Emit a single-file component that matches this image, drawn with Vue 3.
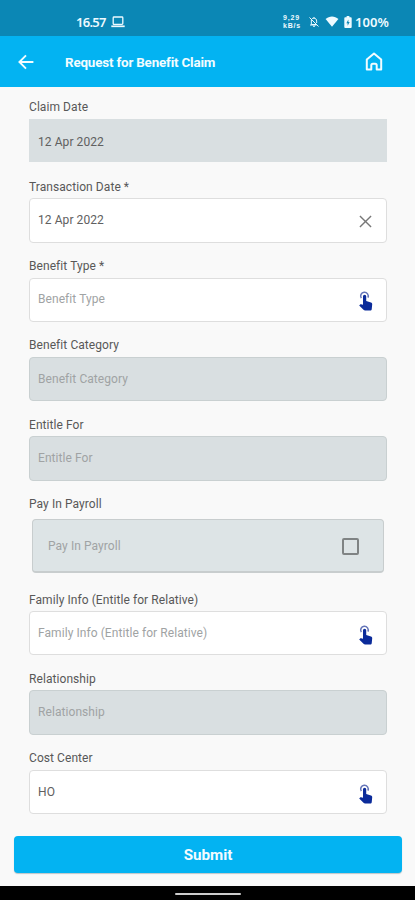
<script setup>
const fields = [
  { label: 'Claim Date', text: '12 Apr 2022', disabled: true, kind: 'square' },
  { label: 'Transaction Date *', text: '12 Apr 2022', icon: 'clear' },
  { label: 'Benefit Type *', hint: 'Benefit Type', icon: 'touch' },
  { label: 'Benefit Category', hint: 'Benefit Category', disabled: true },
  { label: 'Entitle For', hint: 'Entitle For', disabled: true },
  { label: 'Pay In Payroll', hint: 'Pay In Payroll', disabled: true, icon: 'check', kind: 'inset' },
  { label: 'Family Info (Entitle for Relative)', hint: 'Family Info (Entitle for Relative)', icon: 'touch' },
  { label: 'Relationship', hint: 'Relationship', disabled: true },
  { label: 'Cost Center', text: 'HO', icon: 'touch' },
]
</script>

<template>
  <div class="screen">
    <div class="status">
      <span class="time">16.57</span>
      <svg class="laptop" viewBox="0 0 14 12" fill="none" stroke="currentColor">
        <rect x="2.2" y="1" width="9.6" height="7.4" rx="0.8" stroke-width="1.3" />
        <path d="M0.3 10.3h13.4" stroke-width="1.7" />
      </svg>
      <span class="speed"><span>9,29</span><span>kB/s</span></span>
      <svg class="bell" viewBox="0 0 24 24" fill="none" stroke="currentColor" stroke-width="2">
        <path d="M8 5.5C9 4.7 10 4.3 12 4.3c3.4 0 5.3 2.5 5.3 6V14M6.7 8v9H17M4 18h13M10 20.5h4M12 2v2.5M3 3l18 18" />
      </svg>
      <svg class="wifi" viewBox="0 0 14 12" fill="currentColor"><path d="M0 3.4C4 -.3 10 -.3 14 3.4L7 11.8z" /></svg>
      <svg class="battery" viewBox="0 0 8 13">
        <path fill="currentColor" d="M2.5 0h3v1.4H7a1 1 0 0 1 1 1V12a1 1 0 0 1-1 1H1a1 1 0 0 1-1-1V2.4a1 1 0 0 1 1-1h1.5z" />
        <path fill="#0b87b5" d="M4.4 3.8v2.7h1.4L3.6 10.5V7.8H2.2z" />
      </svg>
      <span class="percent">100%</span>
    </div>

    <header class="bar">
      <svg class="back" viewBox="0 0 16 16" fill="none" stroke="currentColor" stroke-width="1.9">
        <path d="M15.4 8H1.6M8 1.3L1.4 8L8 14.7" />
      </svg>
      <h1>Request for Benefit Claim</h1>
      <svg class="home" viewBox="0 0 18 19" fill="none" stroke="currentColor" stroke-width="2" stroke-linejoin="round">
        <path d="M1.8 7.6L9 1.5l7.2 6.1V17.5h-4.5v-4.3a1.5 1.5 0 0 0-1.5-1.5H7.8a1.5 1.5 0 0 0-1.5 1.5v4.3H1.8z" />
      </svg>
    </header>

    <main class="form">
      <div v-for="f in fields" :key="f.label" class="field" :class="f.kind">
        <div class="label">{{ f.label }}</div>
        <div class="box" :class="{ disabled: f.disabled }">
          <span :class="f.hint ? 'hint' : 'value'">{{ f.hint || f.text }}</span>
          <svg v-if="f.icon === 'clear'" class="clear" viewBox="0 0 14 14" fill="none" stroke="#777" stroke-width="1.5">
            <path d="M1 1l12 12M13 1L1 13" />
          </svg>
          <svg v-if="f.icon === 'touch'" class="touch" viewBox="0 0 14 20">
            <path d="M2.3 6.5A4 4 0 1 1 9.3 5.9" fill="none" stroke="#6575b8" stroke-width="1.6" />
            <path fill="#0b2b9a" d="M4.1 4.5a1.7 1.7 0 0 1 3.4 0v4.9l5 1.6c.9.3 1.4 1 1.3 1.9l-.5 5.2c-.1.8-.7 1.4-1.5 1.4H6.2c-.5 0-.9-.2-1.3-.5L.1 14.3l.8-1c.3-.4.8-.5 1.2-.4l2 .5z" />
          </svg>
          <span v-if="f.icon === 'check'" class="check"></span>
        </div>
      </div>
    </main>

    <button class="submit">Submit</button>
    <footer class="nav"><span></span></footer>
  </div>
</template>

<style>
body { margin: 0; }
</style>

<style scoped>
.screen {
  width: 415px;
  height: 900px;
  display: flex;
  flex-direction: column;
  overflow: hidden;
  background: #f9f9f9;
  font-family: Roboto, sans-serif;
}
svg { display: block; flex: none; overflow: visible; }
.status {
  height: 36px;
  flex: none;
  box-sizing: border-box;
  padding: 7px 26px 0 76px;
  display: flex;
  align-items: center;
  background: #0b87b5;
  color: #eefaff;
  font: 600 13px/16px "Noto Sans", sans-serif;
}
.time { width: 35px; letter-spacing: -0.7px; }
.laptop { width: 14px; height: 12px; }
.speed {
  margin-left: auto;
  width: 19px;
  display: flex;
  flex-direction: column;
  font: 700 7px/8px "Liberation Sans", sans-serif;
  letter-spacing: 0.8px;
}
.bell { width: 12px; height: 12px; margin-left: 6px; }
.wifi { width: 14px; height: 11px; margin-left: 5px; }
.battery { width: 8px; height: 12px; margin-left: 5px; }
.percent { width: 34px; margin-left: 3px; letter-spacing: 0.1px; }
.bar {
  height: 51px;
  flex: none;
  box-sizing: border-box;
  padding: 0 32px 0 18px;
  display: flex;
  align-items: center;
  background: #03b3f2;
  color: #f2fcff;
}
.back { width: 16px; height: 16px; }
h1 { margin: 2px 0 0 31px; font-size: 13.4px; line-height: 20px; font-weight: 700; letter-spacing: -0.18px; white-space: nowrap; }
.home { width: 18px; height: 19px; margin-left: auto; }
.form { box-sizing: border-box; flex: none; padding: 12.3px 28px 0 29px; height: 736px; }
.label { height: 16px; margin-bottom: 3.5px; color: #585858; font-size: 12px; line-height: 16px; letter-spacing: 0.07px; }
.field { margin-bottom: 15.5px; }
.box {
  height: 44.4px;
  box-sizing: border-box;
  border: 1px solid #dedede;
  border-radius: 4px;
  background: #fff;
  padding: 0 14px 1px 8px;
  display: flex;
  align-items: center;
  justify-content: space-between;
  font-size: 12px;
  letter-spacing: 0.07px;
}
.box.disabled { background: #d9dfe1; border-color: #c9d0d1; }
.value { color: #606060; }
.hint { color: #a0a3a4; }
.square .label { margin-bottom: 4px; }
.square .box { height: 43px; border-color: #d9dfe1; border-radius: 0; padding: 3px 14px 0 8px; }
.square { margin-bottom: 16.4px; }
.inset .box { height: 54px; margin: 7px 3px 0; padding: 1px 24px 0 15px; background: #dde4e6; border-color: #c8cdce; border-bottom-width: 2px; }
.inset { margin-bottom: 18.3px; }
.clear { width: 13px; height: 13px; position: relative; top: 1.5px; }
.touch { width: 13.5px; height: 19px; position: relative; top: 2.5px; }
.check { box-sizing: border-box; width: 17px; height: 17px; border: 2px solid #7f8384; border-radius: 2px; }
.submit {
  flex: none;
  width: 388px;
  height: 37px;
  margin: 12.5px 0 0 14px;
  padding: 2px 0 0;
  border: 0;
  border-radius: 4px;
  background: #03b3f2;
  box-shadow: 0 1px 1px #bcc5c8;
  color: #f3fcff;
  font: 700 15.2px/35px Roboto, sans-serif;
}
.nav { margin-top: auto; height: 14px; flex: none; background: #000; display: flex; justify-content: center; align-items: center; }
.nav span { width: 66px; height: 2px; margin-top: 2px; border-radius: 1px; background: #ccc; }
</style>
